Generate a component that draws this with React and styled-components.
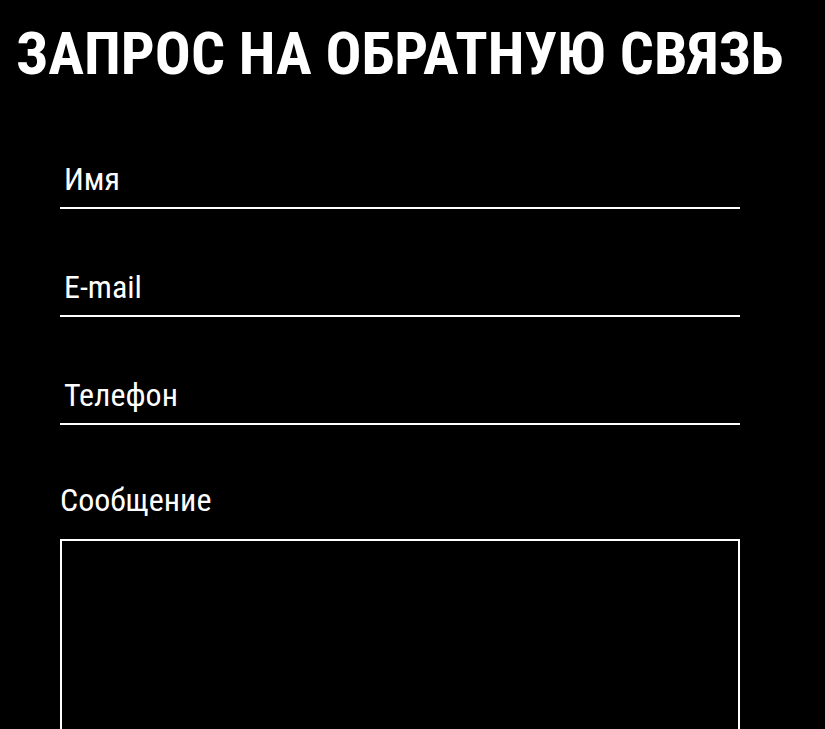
import styled, { createGlobalStyle } from 'styled-components';

const GlobalStyle = createGlobalStyle`
  html, body {
    margin: 0;
    padding: 0;
    background: #000000;
  }
  body {
    font-family: 'Roboto Condensed', Roboto, 'Liberation Sans', sans-serif;
    font-stretch: condensed;
    color: #FFFFFF;
  }
`;

const Page = styled.div`
  padding: 19px 16px 0;
`;

const Title = styled.h1`
  margin: 0;
  font-size: 59.8px;
  font-weight: 700;
  line-height: 70px;
  text-transform: uppercase;
  color: #FFFFFF;
`;

const Form = styled.form`
  display: flex;
  flex-direction: column;
  width: 680px;
  margin: 72px 0 0 44px;
`;

const Field = styled.input`
  display: block;
  width: 100%;
  box-sizing: border-box;
  height: 48px;
  margin: 0 0 60px;
  padding: 0 4px 10px;
  background: transparent;
  border: none;
  border-bottom: 2px solid #FFFFFF;
  outline: none;
  font-family: inherit;
  font-stretch: inherit;
  font-size: 32px;
  color: #FFFFFF;

  &::placeholder {
    color: #FFFFFF;
    opacity: 1;
  }
`;

const Label = styled.label`
  display: block;
  font-size: 32px;
  line-height: 30px;
  margin-bottom: 24px;
`;

const Message = styled.textarea`
  display: block;
  width: 100%;
  box-sizing: border-box;
  height: 260px;
  background: transparent;
  border: 2px solid #FFFFFF;
  outline: none;
  resize: none;
  color: #FFFFFF;
`;

export default function App() {
  return (
    <>
      <GlobalStyle />
      <Page>
        <Title>Запрос на обратную связь</Title>
        <Form>
          <Field type="text" placeholder="Имя" />
          <Field type="email" placeholder="E-mail" />
          <Field type="tel" placeholder="Телефон" />
          <Label htmlFor="message">Сообщение</Label>
          <Message id="message" />
        </Form>
      </Page>
    </>
  );
}
